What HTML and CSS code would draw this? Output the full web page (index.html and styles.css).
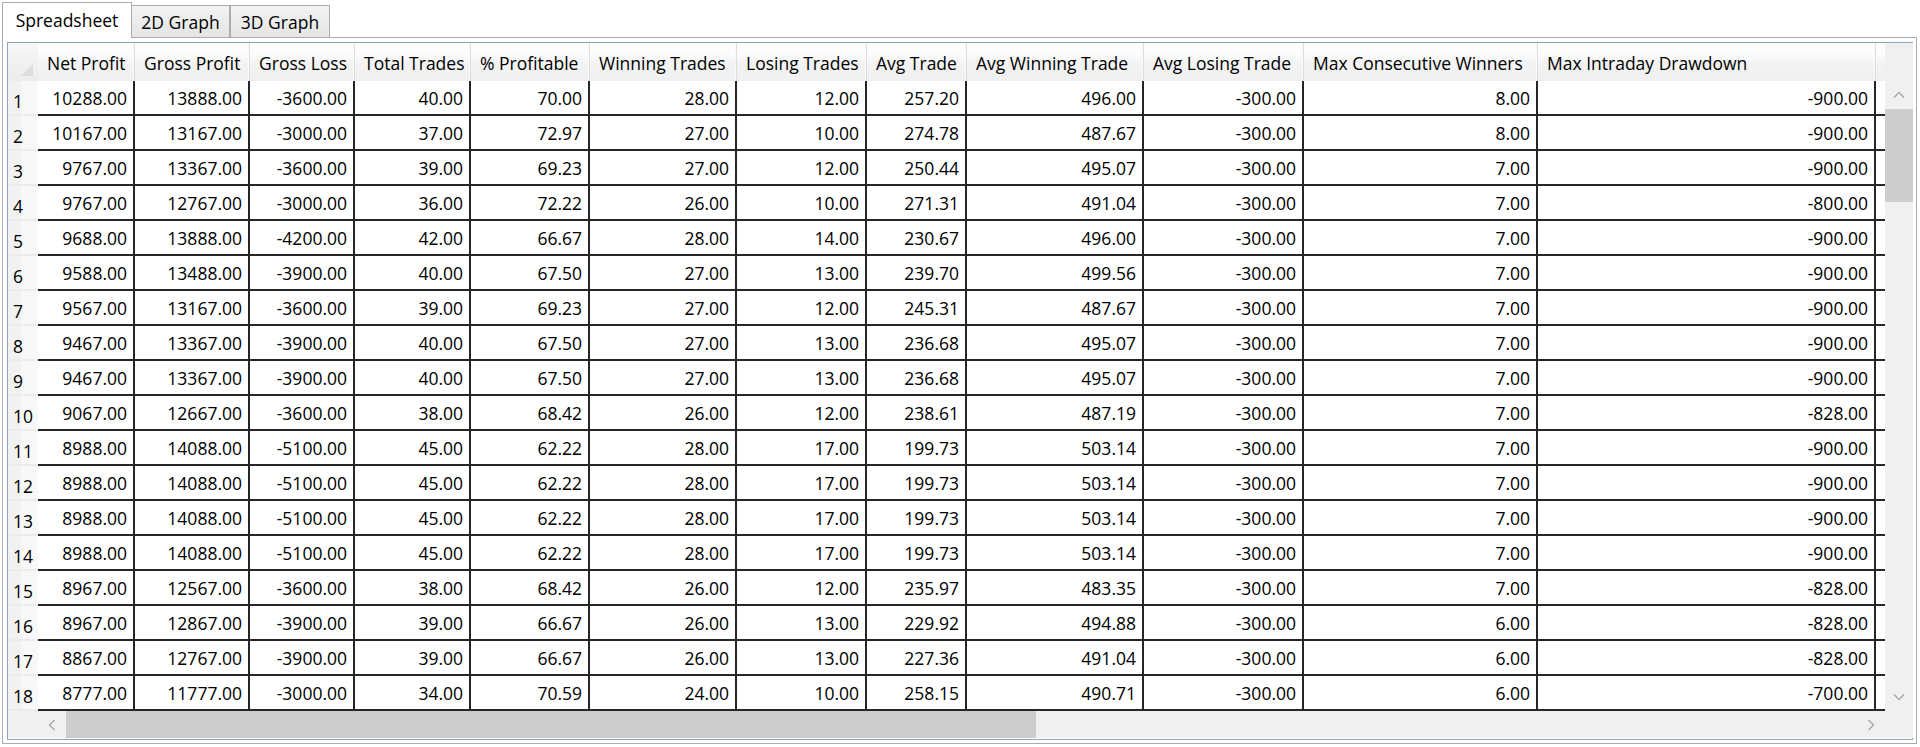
FILE: index.html
```html
<!DOCTYPE html>
<html lang="en">
<head>
<meta charset="utf-8">
<title>Optimization Report</title>
<link rel="stylesheet" href="styles.css">
</head>
<body>
<div class="window">
  <div class="tabs">
    <div class="tab tab-active tab-sheet">Spreadsheet</div>
    <div class="tab tab-2d">2D Graph</div>
    <div class="tab tab-3d">3D Graph</div>
  </div>
  <div class="panel">
    <div class="datagrid">
      <div class="viewport">
        <table class="sheet">
          <colgroup>
            <col class="c-rh"><col class="c1"><col class="c2"><col class="c3"><col class="c4"><col class="c5"><col class="c6"><col class="c7"><col class="c8"><col class="c9"><col class="c10"><col class="c11"><col class="c12"><col class="c-fill">
          </colgroup>
          <thead>
            <tr>
              <th class="corner"><svg class="corner-tri" width="14" height="14" viewBox="0 0 14 14"><polygon points="13,1 13,13 1,13" fill="#dcdcdc"/></svg></th>
              <th>Net Profit</th><th>Gross Profit</th><th>Gross Loss</th><th>Total Trades</th><th>% Profitable</th><th>Winning Trades</th><th>Losing Trades</th><th>Avg Trade</th><th>Avg Winning Trade</th><th>Avg Losing Trade</th><th>Max Consecutive Winners</th><th>Max Intraday Drawdown</th><th class="hfill"></th>
            </tr>
          </thead>
          <tbody>
            <tr><th class="rh">1</th><td>10288.00</td><td>13888.00</td><td>-3600.00</td><td>40.00</td><td>70.00</td><td>28.00</td><td>12.00</td><td>257.20</td><td>496.00</td><td>-300.00</td><td>8.00</td><td>-900.00</td><td class="fill"></td></tr>
            <tr><th class="rh">2</th><td>10167.00</td><td>13167.00</td><td>-3000.00</td><td>37.00</td><td>72.97</td><td>27.00</td><td>10.00</td><td>274.78</td><td>487.67</td><td>-300.00</td><td>8.00</td><td>-900.00</td><td class="fill"></td></tr>
            <tr><th class="rh">3</th><td>9767.00</td><td>13367.00</td><td>-3600.00</td><td>39.00</td><td>69.23</td><td>27.00</td><td>12.00</td><td>250.44</td><td>495.07</td><td>-300.00</td><td>7.00</td><td>-900.00</td><td class="fill"></td></tr>
            <tr><th class="rh">4</th><td>9767.00</td><td>12767.00</td><td>-3000.00</td><td>36.00</td><td>72.22</td><td>26.00</td><td>10.00</td><td>271.31</td><td>491.04</td><td>-300.00</td><td>7.00</td><td>-800.00</td><td class="fill"></td></tr>
            <tr><th class="rh">5</th><td>9688.00</td><td>13888.00</td><td>-4200.00</td><td>42.00</td><td>66.67</td><td>28.00</td><td>14.00</td><td>230.67</td><td>496.00</td><td>-300.00</td><td>7.00</td><td>-900.00</td><td class="fill"></td></tr>
            <tr><th class="rh">6</th><td>9588.00</td><td>13488.00</td><td>-3900.00</td><td>40.00</td><td>67.50</td><td>27.00</td><td>13.00</td><td>239.70</td><td>499.56</td><td>-300.00</td><td>7.00</td><td>-900.00</td><td class="fill"></td></tr>
            <tr><th class="rh">7</th><td>9567.00</td><td>13167.00</td><td>-3600.00</td><td>39.00</td><td>69.23</td><td>27.00</td><td>12.00</td><td>245.31</td><td>487.67</td><td>-300.00</td><td>7.00</td><td>-900.00</td><td class="fill"></td></tr>
            <tr><th class="rh">8</th><td>9467.00</td><td>13367.00</td><td>-3900.00</td><td>40.00</td><td>67.50</td><td>27.00</td><td>13.00</td><td>236.68</td><td>495.07</td><td>-300.00</td><td>7.00</td><td>-900.00</td><td class="fill"></td></tr>
            <tr><th class="rh">9</th><td>9467.00</td><td>13367.00</td><td>-3900.00</td><td>40.00</td><td>67.50</td><td>27.00</td><td>13.00</td><td>236.68</td><td>495.07</td><td>-300.00</td><td>7.00</td><td>-900.00</td><td class="fill"></td></tr>
            <tr><th class="rh">10</th><td>9067.00</td><td>12667.00</td><td>-3600.00</td><td>38.00</td><td>68.42</td><td>26.00</td><td>12.00</td><td>238.61</td><td>487.19</td><td>-300.00</td><td>7.00</td><td>-828.00</td><td class="fill"></td></tr>
            <tr><th class="rh">11</th><td>8988.00</td><td>14088.00</td><td>-5100.00</td><td>45.00</td><td>62.22</td><td>28.00</td><td>17.00</td><td>199.73</td><td>503.14</td><td>-300.00</td><td>7.00</td><td>-900.00</td><td class="fill"></td></tr>
            <tr><th class="rh">12</th><td>8988.00</td><td>14088.00</td><td>-5100.00</td><td>45.00</td><td>62.22</td><td>28.00</td><td>17.00</td><td>199.73</td><td>503.14</td><td>-300.00</td><td>7.00</td><td>-900.00</td><td class="fill"></td></tr>
            <tr><th class="rh">13</th><td>8988.00</td><td>14088.00</td><td>-5100.00</td><td>45.00</td><td>62.22</td><td>28.00</td><td>17.00</td><td>199.73</td><td>503.14</td><td>-300.00</td><td>7.00</td><td>-900.00</td><td class="fill"></td></tr>
            <tr><th class="rh">14</th><td>8988.00</td><td>14088.00</td><td>-5100.00</td><td>45.00</td><td>62.22</td><td>28.00</td><td>17.00</td><td>199.73</td><td>503.14</td><td>-300.00</td><td>7.00</td><td>-900.00</td><td class="fill"></td></tr>
            <tr><th class="rh">15</th><td>8967.00</td><td>12567.00</td><td>-3600.00</td><td>38.00</td><td>68.42</td><td>26.00</td><td>12.00</td><td>235.97</td><td>483.35</td><td>-300.00</td><td>7.00</td><td>-828.00</td><td class="fill"></td></tr>
            <tr><th class="rh">16</th><td>8967.00</td><td>12867.00</td><td>-3900.00</td><td>39.00</td><td>66.67</td><td>26.00</td><td>13.00</td><td>229.92</td><td>494.88</td><td>-300.00</td><td>6.00</td><td>-828.00</td><td class="fill"></td></tr>
            <tr><th class="rh">17</th><td>8867.00</td><td>12767.00</td><td>-3900.00</td><td>39.00</td><td>66.67</td><td>26.00</td><td>13.00</td><td>227.36</td><td>491.04</td><td>-300.00</td><td>6.00</td><td>-828.00</td><td class="fill"></td></tr>
            <tr><th class="rh">18</th><td>8777.00</td><td>11777.00</td><td>-3000.00</td><td>34.00</td><td>70.59</td><td>24.00</td><td>10.00</td><td>258.15</td><td>490.71</td><td>-300.00</td><td>6.00</td><td>-700.00</td><td class="fill"></td></tr>
          </tbody>
        </table>
      </div>
      <div class="vscroll">
        <div class="vscroll-head"></div>
        <div class="sb-btn sb-btn-v">
          <svg width="12" height="8" viewBox="0 0 12 8"><polyline points="1,6.5 6,1.5 11,6.5" fill="none" stroke="#a6a6a6" stroke-width="1.3"/></svg>
        </div>
        <div class="sb-track sb-track-v">
          <div class="sb-thumb-v"></div>
        </div>
        <div class="sb-btn sb-btn-v">
          <svg width="12" height="8" viewBox="0 0 12 8"><polyline points="1,1.5 6,6.5 11,1.5" fill="none" stroke="#a6a6a6" stroke-width="1.3"/></svg>
        </div>
      </div>
      <div class="hscroll">
        <div class="hscroll-lead"></div>
        <div class="sb-btn sb-btn-h">
          <svg width="8" height="12" viewBox="0 0 8 12"><polyline points="6.5,1 1.5,6 6.5,11" fill="none" stroke="#a6a6a6" stroke-width="1.3"/></svg>
        </div>
        <div class="sb-track sb-track-h">
          <div class="sb-thumb-h"></div>
        </div>
        <div class="sb-btn sb-btn-h">
          <svg width="8" height="12" viewBox="0 0 8 12"><polyline points="1.5,1 6.5,6 1.5,11" fill="none" stroke="#a6a6a6" stroke-width="1.3"/></svg>
        </div>
      </div>
      <div class="sb-corner"></div>
    </div>
  </div>
</div>
</body>
</html>
```

FILE: styles.css
```css
* {
  box-sizing: border-box;
}

html, body {
  margin: 0;
  padding: 0;
  background: #ffffff;
}

body {
  font-family: "Open Sans", "Noto Sans", "Liberation Sans", sans-serif;
  font-size: 17.5px;
  color: #000000;
}

.window {
  padding: 2px 3px 0 2px;
  height: 747px;
  display: flex;
  flex-direction: column;
}

/* ---------- tabs ---------- */
.tabs {
  display: flex;
  align-items: flex-end;
  height: 36px;
  flex: none;
  position: relative;
  z-index: 2;
}

.tab {
  height: 32px;
  margin-bottom: 1px;
  border: 1px solid #acacac;
  border-bottom: none;
  background: linear-gradient(to bottom, #f2f2f2 0%, #ebebeb 55%, #e5e5e5 100%);
  display: flex;
  justify-content: center;
  padding-top: 5px;
  line-height: 22px;
  white-space: nowrap;
}

.tab + .tab {
  margin-left: -1px;
}

.tab-active {
  height: 36px;
  margin-bottom: 0;
  background: #ffffff;
  padding-top: 6px;
}

.tab-sheet { width: 130px; }
.tab-2d { width: 99px; }
.tab-3d { width: 100px; margin-left: 0 !important; }

/* ---------- tab panel ---------- */
.panel {
  flex: none;
  margin-top: -1px;
  height: 707px;
  border: 1px solid #acacac;
  padding: 4px 3px 3px 4px;
  background: #ffffff;
}

.datagrid {
  height: 698px;
  border: 1px solid #8aa6c6;
  display: grid;
  grid-template-columns: 1877px 28px;
  grid-template-rows: 668px 27px;
  background: #ffffff;
}

.viewport {
  overflow: hidden;
}

/* ---------- sheet ---------- */
.sheet {
  table-layout: fixed;
  border-collapse: separate;
  border-spacing: 0;
  width: 1877px;
}

.c-rh { width: 30px; }
.c1 { width: 97px; }
.c2 { width: 115px; }
.c3 { width: 105px; }
.c4 { width: 116px; }
.c5 { width: 119px; }
.c6 { width: 147px; }
.c7 { width: 130px; }
.c8 { width: 100px; }
.c9 { width: 177px; }
.c10 { width: 160px; }
.c11 { width: 234px; }
.c12 { width: 338px; }
.c-fill { width: auto; }

.sheet thead tr {
  height: 38px;
}

.sheet thead th {
  font-weight: normal;
  text-align: left;
  padding: 1px 0 0 9px;
  white-space: nowrap;
  overflow: hidden;
  vertical-align: middle;
  background: linear-gradient(to bottom, #ffffff 0%, #fbfbfb 35%, #f3f3f3 50%, #f0f0f0 100%);
  border-right: 1px solid #dedede;
  box-shadow: inset -1px 0 0 #f9f9f9;
}

.sheet thead th.corner {
  padding: 0;
  position: relative;
  background: linear-gradient(to bottom, #f7f7f7 0%, #f1f1f1 50%, #ececec 100%);
  border-right: none;
  box-shadow: none;
}

.corner-tri {
  position: absolute;
  right: 4px;
  bottom: 4px;
}

.sheet thead th.hfill {
  border-right: none;
  box-shadow: none;
  padding: 0;
}

.sheet tbody tr {
  height: 35px;
}

.sheet td {
  padding: 0 6px 0 0;
  text-align: right;
  white-space: nowrap;
  vertical-align: middle;
  border-right: 2px solid #262626;
  border-bottom: 2px solid #262626;
}

.sheet td.fill {
  border-right: none;
  padding: 0;
}

.sheet th.rh {
  font-weight: normal;
  text-align: left;
  padding: 7px 0 0 5px;
  vertical-align: middle;
  background: linear-gradient(to right, #f1f1f1 0, #f1f1f1 12px, #f8f8f8 14px, #f8f8f8 100%);
  border-bottom: 2px solid #ececec;
}

/* ---------- scrollbars ---------- */
.vscroll {
  background: #f0f0f0;
  display: flex;
  flex-direction: column;
}

.vscroll-head {
  height: 38px;
  flex: none;
}

.sb-btn {
  flex: none;
  display: flex;
  align-items: center;
  justify-content: center;
  background: #f0f0f0;
}

.sb-btn-v {
  height: 28px;
}

.sb-btn-h {
  width: 28px;
}

.sb-track {
  flex: 1;
  display: flex;
}

.sb-track-v {
  flex-direction: column;
}

.sb-thumb-v {
  height: 93px;
  width: 100%;
  background: #cdcdcd;
}

.hscroll {
  background: #f0f0f0;
  display: flex;
}

.hscroll-lead {
  width: 30px;
  flex: none;
}

.sb-thumb-h {
  width: 970px;
  height: 100%;
  background: #cdcdcd;
}

.sb-corner {
  background: #f0f0f0;
}
```
